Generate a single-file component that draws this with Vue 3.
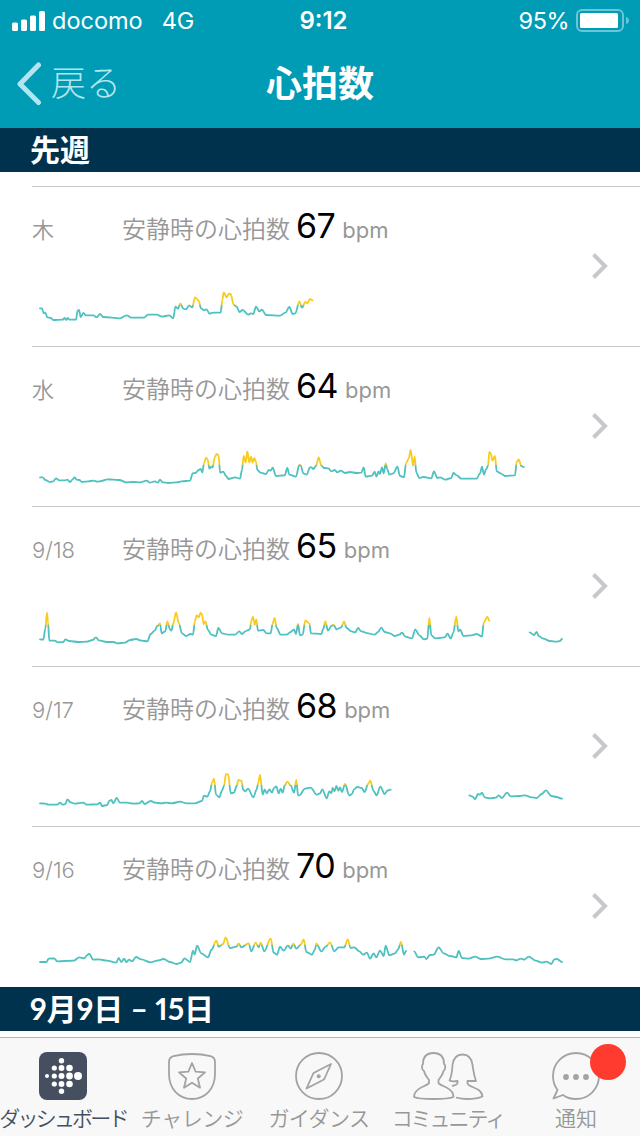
<script setup>
import { computed } from "vue";

const days = [
  {
    label: "木",
    bpm: 67,
    lines: [
      "60,115 66,115 71,130 76,128 82,142 92,144 100,150 128,149 134,144 139,150 143,144 148,149 168,149 173,122 177,120 182,141 190,129 198,136 220,136 230,142 240,132 250,141 300,145 320,136 334,143 372,143 384,134 410,134 426,140 448,136 460,145 466,110 474,116 481,100 490,116 498,118 507,106 517,112 525,82 536,92 543,115 553,121 560,118 568,131 580,128 602,128 607,90 611,67 620,82 626,72 632,72 641,104 650,110 658,126 668,120 685,134 692,130 700,132 708,110 718,124 726,119 738,135 780,137 796,128 808,111 818,132 826,130 838,94 846,113 856,96 862,100 870,87 878,91",
    ],
  },
  {
    label: "水",
    bpm: 64,
    lines: [
      "60,142 68,142 76,150 90,156 100,154 108,145 118,151 135,151 142,149 150,156 158,148 164,142 170,149 178,150 186,156 205,154 220,152 232,155 244,153 262,148 280,149 298,150 318,157 340,156 360,157 380,152 390,158 404,154 414,158 420,149 428,157 445,159 470,157 485,154 510,152 518,130 526,129 536,120 542,117 547,128 552,100 558,83 563,88 568,116 574,110 578,112 584,82 590,72 596,76 600,128 610,125 618,138 626,147 645,142 660,146 666,120 671,78 677,98 682,64 688,98 693,80 698,98 703,84 708,96 712,120 722,128 738,132 746,120 752,122 758,113 768,138 780,137 794,136 802,114 808,134 828,140 838,104 842,106 850,130 860,134 870,112 874,112 880,117 888,108 896,82 904,106 912,114 925,115 934,124 944,120 952,127 962,122 975,129 990,126 1010,129 1024,128 1031,112 1037,140 1056,137 1064,125 1069,140 1076,124 1080,132 1086,112 1091,130 1097,100 1102,118 1108,134 1120,130 1132,110 1140,138 1152,142 1158,100 1166,86 1172,60 1179,106 1184,80 1189,128 1198,144 1210,141 1234,145 1242,124 1252,144 1260,142 1276,149 1294,144 1300,129 1310,136 1324,146 1370,146 1380,130 1386,110 1392,134 1398,118 1404,108 1408,66 1413,72 1417,92 1425,78 1430,124 1442,130 1455,138 1485,136 1490,96 1496,88 1504,108 1511,111",
    ],
  },
  {
    label: "9/18",
    bpm: 65,
    lines: [
      "60,148 70,149 76,116 81,68 84,96 88,152 104,152 114,157 130,156 136,148 148,153 175,156 200,155 218,150 228,142 236,151 260,156 280,156 292,160 315,158 330,150 348,147 365,152 382,154 392,132 404,122 412,108 420,100 425,130 436,124 442,94 450,118 454,122 460,100 468,67 476,98 486,130 498,138 512,132 519,134 525,92 530,76 536,82 542,68 546,74 551,102 556,94 564,120 574,134 588,138 595,114 606,130 625,134 645,134 658,124 666,132 676,124 690,118 694,92 699,80 704,104 709,88 714,122 730,120 740,130 752,130 758,100 764,84 770,114 782,134 800,134 812,126 822,118 828,132 834,102 840,136 848,134 856,91 868,100 873,130 904,132 910,116 916,94 924,122 934,108 940,104 950,118 964,112 972,94 980,114 994,124 1006,127 1014,114 1024,124 1045,130 1064,134 1074,126 1084,113 1094,126 1110,130 1124,138 1138,134 1146,128 1156,140 1176,145 1186,118 1198,136 1212,148 1222,146 1228,84 1234,136 1246,145 1274,142 1283,131 1292,146 1300,128 1309,80 1315,124 1321,119 1330,138 1355,136 1370,132 1386,140 1391,98 1402,80 1408,92",
      "1529,127 1542,135 1550,126 1556,138 1570,146 1590,153 1610,155 1620,153 1626,147",
    ],
  },
  {
    label: "9/17",
    bpm: 68,
    lines: [
      "60,160 75,161 85,164 112,164 120,158 128,164 136,162 142,148 152,157 165,161 190,158 200,164 232,163 240,158 246,168 262,165 268,152 274,150 280,160 290,144 300,158 320,158 340,161 358,160 366,153 374,162 392,153 405,158 425,160 438,158 455,160 480,155 500,160 525,160 546,153 552,137 562,140 570,124 576,98 582,86 588,134 598,142 606,122 612,108 618,72 625,74 632,130 642,128 650,108 655,90 664,92 670,120 676,124 684,116 700,142 710,118 715,98 720,74 728,134 734,118 740,130 748,118 756,128 762,114 769,109 776,130 782,116 788,128 794,106 802,95 812,106 822,128 829,90 834,136 838,136 855,116 872,113 890,134 900,130 907,118 920,145 928,124 934,130 938,114 944,124 949,108 955,122 960,112 966,126 975,102 988,136 996,132 1002,118 1012,111 1025,114 1034,126 1044,102 1051,92 1060,122 1070,136 1081,110 1094,132 1102,122 1112,119",
      "1348,136 1358,140 1365,148 1374,132 1380,134 1386,128 1394,142 1410,145 1428,143 1436,136 1446,144 1461,128 1472,139 1500,138 1515,136 1535,142 1550,144 1565,132 1578,121 1594,138 1610,141 1626,146",
    ],
  },
  {
    label: "9/16",
    bpm: 70,
    lines: [
      "60,156 79,156 86,146 103,145 111,154 161,152 178,142 193,145 201,136 208,131 219,149 236,148 261,152 289,158 296,144 304,156 312,146 319,156 327,149 336,154 348,141 364,148 392,157 411,152 431,147 450,156 469,162 484,158 493,145 510,156 519,122 524,134 531,107 544,130 564,142 574,120 589,92 596,110 609,102 617,82 630,114 649,110 656,100 664,112 686,100 694,124 707,98 716,112 722,98 733,124 752,85 761,128 771,134 780,110 791,122 804,106 812,116 820,101 829,116 842,104 851,88 859,126 876,134 885,118 889,100 904,124 917,110 930,97 943,124 956,112 973,112 983,88 992,114 1003,112 1018,124 1029,134 1041,128 1050,146 1061,130 1069,142 1080,122 1091,138 1097,107 1108,136 1125,130 1134,118 1143,96 1152,134 1158,123",
      "1183,124 1194,142 1213,140 1219,147 1230,135 1241,134 1256,112 1271,130 1290,138 1309,142 1316,123 1326,144 1346,146 1365,140 1382,147 1406,146 1431,140 1457,148 1479,148 1489,151 1502,146 1513,149 1526,140 1547,152 1566,158 1579,155 1594,162 1603,148 1611,147 1626,156",
    ],
  },
];

const tabs = [
  { key: "dashboard", name: "ダッシュボード" },
  { key: "challenge", name: "チャレンジ" },
  { key: "guidance", name: "ガイダンス" },
  { key: "community", name: "コミュニティ" },
  { key: "notice", name: "通知" },
];

const dots = [
  [8, 24, 2],
  [15.3, 16, 2.6],
  [15.3, 24, 2.6],
  [15.3, 32, 2.6],
  [22.5, 8.7, 2.7],
  [22.5, 16, 2.9],
  [22.5, 24, 3],
  [22.5, 32, 2.9],
  [22.5, 39.3, 2.7],
  [30.5, 16, 3.3],
  [30.5, 24, 3.4],
  [30.5, 32, 3.3],
  [39, 24, 4],
];

// soft curve with flat tangents at every sample
const toPath = (line) => {
  const pts = line.split(" ").map((p) => p.split(",").map(Number));
  let d = `M${pts[0][0]} ${pts[0][1]}`;
  for (let i = 1; i < pts.length; i++) {
    const [px, py] = pts[i - 1];
    const [x, y] = pts[i];
    const third = (x - px) / 3;
    d += `C${px + third} ${py} ${x - third} ${y} ${x} ${y}`;
  }
  return d;
};

const rows = computed(() =>
  days.map((day) => ({ ...day, d: day.lines.map(toPath).join("") })),
);
</script>

<template>
  <div class="screen">
    <header class="top">
      <div class="status">
        <div class="status-left">
          <svg class="signal" width="34" height="20" viewBox="0 0 34 20">
            <rect x="0" y="11.5" width="6" height="8.5" rx="1.5" />
            <rect x="9" y="8.5" width="6" height="11.5" rx="1.5" />
            <rect x="18" y="4.5" width="6" height="15.5" rx="1.5" />
            <rect x="27" y="0" width="6" height="20" rx="1.5" />
          </svg>
          <span class="carrier">docomo</span>
          <span class="network">4G</span>
        </div>
        <span class="clock">9:12</span>
        <div class="status-right">
          <span class="percent">95%</span>
          <svg width="54" height="24" viewBox="0 0 54 24">
            <rect class="battery-frame" x="1" y="1" width="46" height="21" rx="5" />
            <rect x="4" y="4" width="38" height="15" rx="1.5" fill="#fff" />
            <path class="battery-cap" d="M50 8q3 1 3 3.500t-3 3.500z" />
          </svg>
        </div>
      </div>
      <div class="nav">
        <div class="back">
          <svg width="26" height="44" viewBox="0 0 26 44">
            <path d="M21.500 3L3 22l18.500 18.500" />
          </svg>
          <span>戻る</span>
        </div>
        <h1 class="title">心拍数</h1>
      </div>
    </header>

    <h2 class="section">先週</h2>

    <ul class="list">
      <li v-for="row in rows" :key="row.label" class="row">
        <div class="row-main">
          <div class="row-head">
            <span class="day">{{ row.label }}</span>
            <span class="desc">安静時の心拍数</span>
            <span class="bpm">{{ row.bpm }}</span>
            <span class="unit">bpm</span>
          </div>
          <svg class="chart" width="560" height="70" viewBox="0 0 1680 210">
            <defs>
              <linearGradient
                id="zone"
                gradientUnits="userSpaceOnUse"
                x1="0"
                y1="0"
                x2="0"
                y2="210"
              >
                <stop offset="0.49" stop-color="#fbcb1c" />
                <stop offset="0.51" stop-color="#4fc1bf" />
              </linearGradient>
            </defs>
            <path :d="row.d" stroke="url(#zone)" />
          </svg>
        </div>
        <svg class="chevron" width="18" height="28" viewBox="0 0 18 28">
          <path d="M2.500 2.500L14 14 2.500 25.500" />
        </svg>
      </li>
    </ul>

    <h2 class="section">9月9日 – 15日</h2>

    <nav class="tabs">
      <div
        v-for="tab in tabs"
        :key="tab.key"
        class="tab"
        :class="['tab-' + tab.key, { active: tab.key === 'dashboard' }]"
      >
        <svg v-if="tab.key === 'dashboard'" width="48" height="48" viewBox="0 0 48 48">
          <rect width="48" height="48" rx="8" fill="#454f5f" />
          <circle
            v-for="(dot, i) in dots"
            :key="i"
            :cx="dot[0]"
            :cy="dot[1]"
            :r="dot[2]"
            fill="#fff"
          />
        </svg>
        <svg v-else-if="tab.key === 'challenge'" class="line-icon" width="48" height="48" viewBox="0 0 48 48">
          <path d="M24 2C31 2 37 2.800 42.500 4.200C45.500 5 47 7 47 10V22C47 37 37 47 24 47S1 37 1 22V10C1 7 2.500 5 5.500 4.200C11 2.800 17 2 24 2Z" />
          <path d="M24 11l3.600 8.700 9.400.7-7.200 6.100 2.200 9.200-8-4.900-8 4.900 2.200-9.200L11 20.400l9.400-.7z" />
        </svg>
        <svg v-else-if="tab.key === 'guidance'" class="line-icon" width="48" height="48" viewBox="0 0 48 48">
          <circle cx="24" cy="24" r="23" />
          <path d="M36 12L19.500 20.500Q18.500 21 18 22L11.500 36.500 28 28Q29 27.500 29.500 26.500Z" />
          <circle cx="23.700" cy="24.300" r="2" class="dot" />
        </svg>
        <svg v-else-if="tab.key === 'community'" class="line-icon" width="70" height="48" viewBox="0 0 70 48">
          <path d="M20.500 1C27.500 1 31 5 31 12C33 13 32.500 18 30.500 19C29.500 24 27 26 25.500 28V31C27 34 38 35 40 42L40.500 45C37 46.500 30 47 20.500 47S4 46.500 1 45L1.500 42C4 35 14.500 34 16 31V28C14.500 26 12 24 11 19C8.500 18 8.500 13 10 12C10 5 13.500 1 20.500 1Z" />
          <path d="M43 45.500C47 46.500 50 47 54 47C61 47 66 46 69.500 44.500C68.500 35 56 36 54.500 31.500V29H63C60.500 23 60.500 18 59.500 13C58.500 5 55 2.500 49.500 2.500S40.500 5 39.500 13C39 19 39 23 36.500 28.500C39 30 42 29.500 44.500 29V31.500C43 33.500 41 33.500 39 34" />
        </svg>
        <svg v-else class="line-icon" width="48" height="48" viewBox="0 0 48 48">
          <path d="M24 1A23 23 0 1 1 24 47C19 47 14.500 45.800 11 43L1.500 46.500 5.500 38C2.500 34 1 29.500 1 24A23 23 0 0 1 24 1Z" />
          <circle cx="14" cy="25" r="2.900" class="dot" />
          <circle cx="24" cy="25" r="2.900" class="dot" />
          <circle cx="34" cy="25" r="2.900" class="dot" />
        </svg>
        <span v-if="tab.key === 'notice'" class="badge"></span>
        <span class="tab-name">{{ tab.name }}</span>
      </div>
    </nav>
  </div>
</template>

<style>
body {
  margin: 0;
  background: #fff;
}
</style>

<style scoped>
.screen {
  width: 640px;
  height: 1136px;
  display: flex;
  flex-direction: column;
  overflow: hidden;
  background: #fff;
  font-family: Inter, "Noto Sans CJK JP", sans-serif;
}

.top {
  height: 128px;
  flex-shrink: 0;
  background: #009bb4;
  color: #fff;
}

.status {
  height: 41px;
  display: grid;
  grid-template-columns: 1fr auto 1fr;
  align-items: center;
  padding: 0 10px 0 12px;
  font-size: 23.5px;
}

.status-left,
.status-right {
  display: flex;
  align-items: center;
}

.status-right {
  justify-content: flex-end;
  gap: 7px;
}

.signal {
  fill: #fff;
}

.carrier {
  margin-left: 6px;
}

.network {
  margin-left: 19px;
}

.clock {
  padding-left: 5px;
  font-size: 24px;
  font-weight: 600;
}

.percent {
  letter-spacing: -0.5px;
}

.battery-frame {
  fill: none;
  stroke: #6ac6d6;
  stroke-width: 2;
}

.battery-cap {
  fill: #6ac6d6;
}

.nav {
  height: 80px;
  display: grid;
  grid-template-columns: 1fr auto 1fr;
  align-items: center;
}

.back {
  display: flex;
  align-items: center;
  gap: 8px;
  padding-left: 17px;
  color: #b2e5ef;
  font-family: "Noto Sans CJK JP", sans-serif;
  font-size: 35px;
  font-weight: 300;
  line-height: 44px;
}

.back svg {
  margin-top: 6px;
}

.back path {
  fill: none;
  stroke: #b2e5ef;
  stroke-width: 5;
  stroke-linecap: round;
  stroke-linejoin: round;
}

.title {
  margin: 0;
  font-family: "Noto Sans CJK JP", sans-serif;
  font-size: 36px;
  font-weight: 700;
  line-height: 44px;
}

.section {
  height: 44px;
  flex-shrink: 0;
  margin: 0;
  padding-left: 30px;
  background: #00324e;
  color: #fff;
  font-family: Lato, "Noto Sans CJK JP", sans-serif;
  font-size: 30px;
  font-weight: 700;
  font-variant-numeric: proportional-nums;
  line-height: 42px;
}

.list {
  margin: 14px 0 1px;
  padding: 0 0 0 32px;
  list-style: none;
}

.row {
  height: 160px;
  box-sizing: border-box;
  display: flex;
  align-items: center;
  justify-content: space-between;
  padding-right: 31px;
  border-top: 1px solid #c8c7cc;
}

.row-main {
  height: 159px;
}

.row-head {
  height: 83px;
  box-sizing: border-box;
  display: flex;
  align-items: baseline;
  padding-top: 17px;
  color: #979797;
  font-size: 24px;
  line-height: 44px;
}

.day {
  width: 90px;
  font-size: 22px;
  font-weight: 350;
}

.desc {
  font-family: "Noto Sans CJK JP", sans-serif;
  font-weight: 350;
}

.bpm {
  margin-left: 6px;
  color: #000;
  font-size: 34px;
  letter-spacing: -0.5px;
}

.unit {
  margin-left: 7px;
  font-size: 22px;
}

.chart {
  display: block;
  margin-left: -12px;
}

.chart path {
  fill: none;
  stroke-width: 5.500;
  stroke-linecap: round;
  stroke-linejoin: round;
}

.chevron {
  margin-bottom: 2px;
}

.chevron path {
  fill: none;
  stroke: #c7c7cc;
  stroke-width: 4;
}

.tabs {
  height: 99px;
  flex-shrink: 0;
  box-sizing: border-box;
  margin-top: 6px;
  display: grid;
  grid-template-columns: repeat(5, 128px);
  border-top: 1px solid #b2b5b4;
  background: #f8f8f8;
}

.tab {
  position: relative;
  display: flex;
  flex-direction: column;
  align-items: center;
  padding-top: 14px;
  color: #979797;
}

.tab-dashboard,
.tab-guidance {
  padding-right: 2px;
}

.active {
  color: #454f5f;
}

.tab-name {
  margin-top: 2px;
  font-family: "Noto Sans CJK JP", sans-serif;
  font-size: 21px;
  font-weight: 350;
  letter-spacing: -0.5px;
  line-height: 30px;
  white-space: nowrap;
}

.tab-dashboard .tab-name {
  letter-spacing: -2.8px;
}

.tab-community .tab-name {
  letter-spacing: -2px;
}

.tab-notice .tab-name {
  letter-spacing: 0;
}

.line-icon {
  fill: none;
  stroke: #a3a3a3;
  stroke-width: 1.800;
  stroke-linejoin: round;
  overflow: visible;
}

.dot {
  fill: #a3a3a3;
  stroke: none;
}

.badge {
  position: absolute;
  top: 6px;
  right: 14px;
  width: 36px;
  height: 36px;
  border-radius: 50%;
  background: #ff3b30;
}
</style>
